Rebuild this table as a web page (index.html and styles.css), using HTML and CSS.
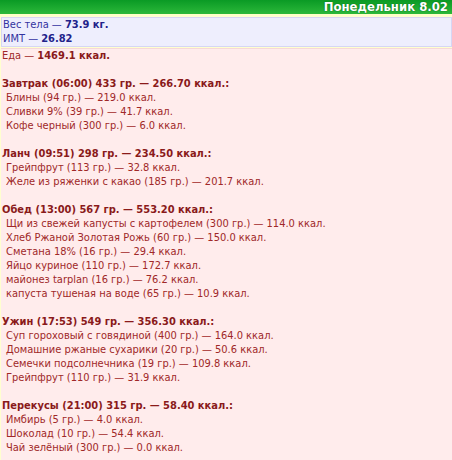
FILE: index.html
```
<!doctype html>
<html lang="ru">

<head>
  <meta charset="utf-8">
  <title>Дневник питания</title>
  <link rel="stylesheet" href="styles.css">
</head>

<body>
  <div class="page">
    <div class="day-title">Понедельник 8.02</div>

    <div class="box weight">
      <div>Вес тела — <b>73.9 кг.</b></div>
      <div>ИМТ — <b>26.82</b></div>
    </div>

    <div class="box food">
      <div>Еда — <b>1469.1 ккал.</b></div>

      <div class="meal">
        <div class="meal-head">Завтрак (06:00) 433 гр. — 266.70 ккал.:</div>
        <div class="item">Блины (94 гр.) — 219.0 ккал.</div>
        <div class="item">Сливки 9% (39 гр.) — 41.7 ккал.</div>
        <div class="item">Кофе черный (300 гр.) — 6.0 ккал.</div>
      </div>

      <div class="meal">
        <div class="meal-head">Ланч (09:51) 298 гр. — 234.50 ккал.:</div>
        <div class="item">Грейпфрут (113 гр.) — 32.8 ккал.</div>
        <div class="item">Желе из ряженки с какао (185 гр.) — 201.7 ккал.</div>
      </div>

      <div class="meal">
        <div class="meal-head">Обед (13:00) 567 гр. — 553.20 ккал.:</div>
        <div class="item">Щи из свежей капусты с картофелем (300 гр.) — 114.0 ккал.</div>
        <div class="item">Хлеб Ржаной Золотая Рожь (60 гр.) — 150.0 ккал.</div>
        <div class="item">Сметана 18% (16 гр.) — 29.4 ккал.</div>
        <div class="item">Яйцо куриное (110 гр.) — 172.7 ккал.</div>
        <div class="item">майонез tarplan (16 гр.) — 76.2 ккал.</div>
        <div class="item">капуста тушеная на воде (65 гр.) — 10.9 ккал.</div>
      </div>

      <div class="meal">
        <div class="meal-head">Ужин (17:53) 549 гр. — 356.30 ккал.:</div>
        <div class="item">Суп гороховый с говядиной (400 гр.) — 164.0 ккал.</div>
        <div class="item">Домашние ржаные сухарики (20 гр.) — 50.6 ккал.</div>
        <div class="item">Семечки подсолнечника (19 гр.) — 109.8 ккал.</div>
        <div class="item">Грейпфрут (110 гр.) — 31.9 ккал.</div>
      </div>

      <div class="meal">
        <div class="meal-head">Перекусы (21:00) 315 гр. — 58.40 ккал.:</div>
        <div class="item">Имбирь (5 гр.) — 4.0 ккал.</div>
        <div class="item">Шоколад (10 гр.) — 54.4 ккал.</div>
        <div class="item">Чай зелёный (300 гр.) — 0.0 ккал.</div>
      </div>
    </div>
  </div>
</body>

</html>
```

FILE: styles.css
```
body {
  margin: 0;
  padding: 0;
  font-family: "DejaVu Sans Condensed", "DejaVu Sans", sans-serif;
  font-size: 11px;
  line-height: 14px;
  background-color: #FFFFD0;
}

.page {
  height: 460px;
  overflow: hidden;
}

.day-title {
  height: 14px;
  padding-right: 4px;
  text-align: right;
  font-size: 13px;
  font-weight: bold;
  line-height: 14px;
  color: #fff;
  background: linear-gradient(#0A9A25, #2CB83A);
  text-shadow: 0 0 1px #0B6E1A, 0 0 1px #0B6E1A;
  border-bottom: 2px solid #FFFFC8;
}

.box {
  margin: 0 0 0 1px;
  padding: 0 0 0 1px;
}

.weight {
  margin-top: 1px;
  background-color: #EEEEFD;
  border: 1px solid #D6D6F4;
  color: #3333A0;
}

.weight b {
  color: #22228A;
}

.food {
  margin-top: 1px;
  background-color: #FFECEC;
  border-top: 1px solid #F6D8D8;
  color: #A02828;
  min-height: 420px;
}

.food b {
  color: #8A1A1A;
}

.meal {
  margin-top: 14px;
}

.meal-head {
  font-weight: bold;
  color: #8A1A1A;
}

.item {
  padding-left: 4px;
}
```
